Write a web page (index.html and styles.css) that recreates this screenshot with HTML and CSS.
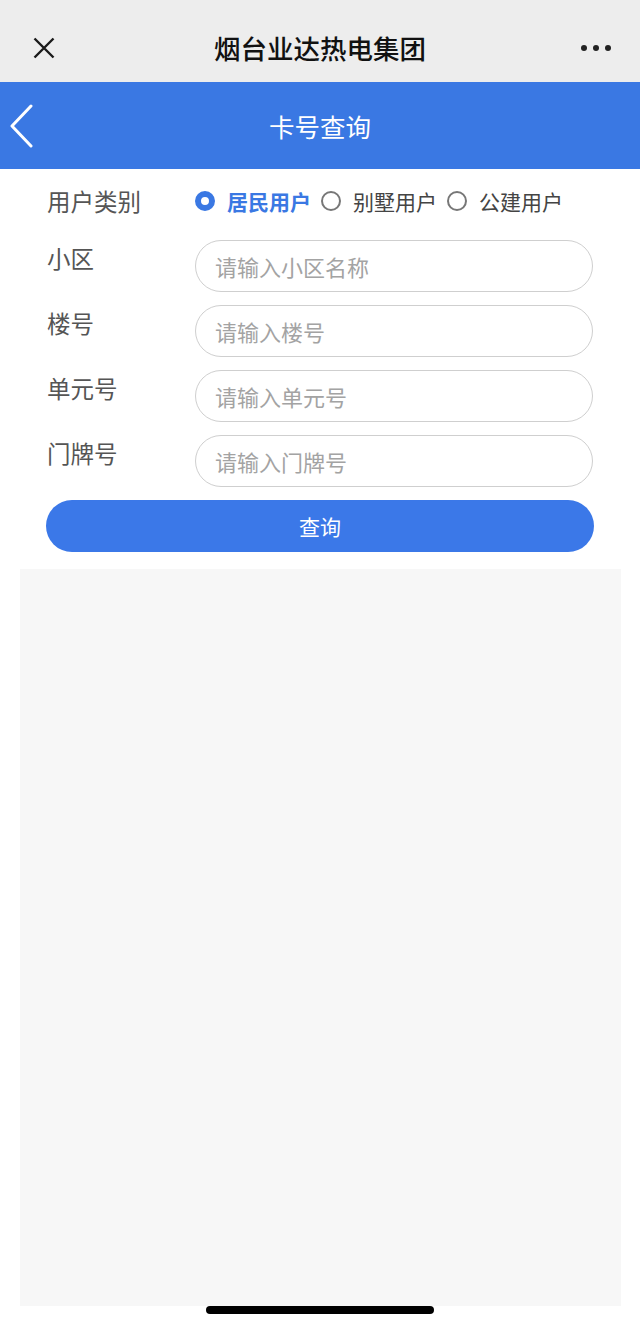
FILE: index.html
```html
<!DOCTYPE html>
<html lang="zh-CN">
<head>
    <meta charset="UTF-8">
    <meta name="viewport" content="width=device-width, initial-scale=1.0">
    <title>卡号查询</title>
    <link rel="stylesheet" href="styles.css">
</head>
<body>
    <div class="page">
        <header class="wx-bar">
            <span class="wx-close">
                <svg width="22" height="22" viewBox="0 0 22 22"><path d="M1.5 1.5 L20.5 20.5 M20.5 1.5 L1.5 20.5" stroke="#1a1a1a" stroke-width="2.4" fill="none"/></svg>
            </span>
            <span class="wx-title">烟台业达热电集团</span>
            <span class="wx-more"><i></i><i></i><i></i></span>
        </header>

        <nav class="nav-bar">
            <span class="nav-back">
                <svg width="26" height="44" viewBox="0 0 26 44"><path d="M22 2 L3 22 L22 42" stroke="#ffffff" stroke-width="3" fill="none" stroke-linecap="round" stroke-linejoin="round"/></svg>
            </span>
            <span class="nav-title">卡号查询</span>
            <span></span>
        </nav>

        <form class="query">
            <div class="type-row">
                <span class="field-label">用户类别</span>
                <div class="radios">
                    <label class="radio checked"><span class="dot"></span>居民用户</label>
                    <label class="radio"><span class="dot"></span>别墅用户</label>
                    <label class="radio"><span class="dot"></span>公建用户</label>
                </div>
            </div>
            <div class="field">
                <span class="field-label">小区</span>
                <input type="text" placeholder="请输入小区名称">
            </div>
            <div class="field">
                <span class="field-label">楼号</span>
                <input type="text" placeholder="请输入楼号">
            </div>
            <div class="field">
                <span class="field-label">单元号</span>
                <input type="text" placeholder="请输入单元号">
            </div>
            <div class="field">
                <span class="field-label">门牌号</span>
                <input type="text" placeholder="请输入门牌号">
            </div>
            <button type="button">查询</button>
        </form>

        <div class="results"></div>

        <div class="home-bar"></div>
    </div>
</body>
</html>
```

FILE: styles.css
```css
body {
    margin: 0;
    background-color: #ffffff;
    font-family: "Noto Sans CJK SC", "Noto Sans", sans-serif;
}
.page {
    position: relative;
    width: 640px;
    height: 1325px;
    overflow: hidden;
}
.wx-bar {
    height: 82px;
    box-sizing: border-box;
    padding-top: 14px;
    background-color: #ededed;
    display: grid;
    grid-template-columns: 1fr auto 1fr;
    align-items: center;
}
.wx-close {
    padding-left: 33px;
    display: flex;
}
.wx-title {
    font-size: 26.5px;
    font-weight: 500;
    color: #111;
    line-height: 1;
}
.wx-more {
    justify-self: end;
    padding-right: 29px;
    display: flex;
    gap: 6px;
}
.wx-more i {
    width: 6px;
    height: 6px;
    border-radius: 50%;
    background-color: #222;
}
.nav-bar {
    height: 87px;
    background-color: #3a78e3;
    display: grid;
    grid-template-columns: 1fr auto 1fr;
    align-items: center;
}
.nav-back {
    padding-left: 9px;
    display: flex;
}
.nav-title {
    font-size: 25.5px;
    color: #ffffff;
    line-height: 1;
}
.query {
    padding: 12px 46px 0 47px;
}
.type-row {
    display: flex;
    align-items: center;
    height: 40px;
    margin-bottom: 19px;
}
.field-label {
    width: 148px;
    flex-shrink: 0;
    font-size: 23.5px;
    line-height: 30px;
    color: #555;
}
.radios {
    display: flex;
    gap: 10px;
}
.radio {
    display: flex;
    align-items: center;
    font-size: 21px;
    color: #444;
    line-height: 1;
}
.radio .dot {
    width: 20px;
    height: 20px;
    box-sizing: border-box;
    border: 2px solid #777;
    border-radius: 50%;
    margin-right: 12px;
    background-color: #fff;
}
.radio.checked {
    color: #3a78e3;
    font-weight: 700;
}
.radio.checked .dot {
    border: 6px solid #3a78e3;
}
.field {
    display: flex;
    align-items: flex-start;
    margin-bottom: 13px;
}
.field .field-label {
    padding-top: 3px;
}
.field input {
    width: 398px;
    height: 52px;
    box-sizing: border-box;
    border: 1.5px solid #cfcfcf;
    border-radius: 26px;
    padding: 0 19px;
    font-family: inherit;
    font-size: 22px;
    color: #333;
    outline: none;
    background-color: #fff;
}
.field input::placeholder {
    color: #a3a3a3;
}
button {
    display: block;
    width: 548px;
    height: 52px;
    margin-left: -1px;
    border: none;
    border-radius: 26px;
    background-color: #3b78e8;
    color: #ffffff;
    font-family: inherit;
    font-size: 21px;
    cursor: pointer;
}
.results {
    margin: 17px 19px 0 20px;
    height: 737px;
    background-color: #f7f7f7;
}
.home-bar {
    position: absolute;
    left: 206px;
    top: 1306px;
    width: 228px;
    height: 8px;
    border-radius: 4px;
    background-color: #000;
}
```
